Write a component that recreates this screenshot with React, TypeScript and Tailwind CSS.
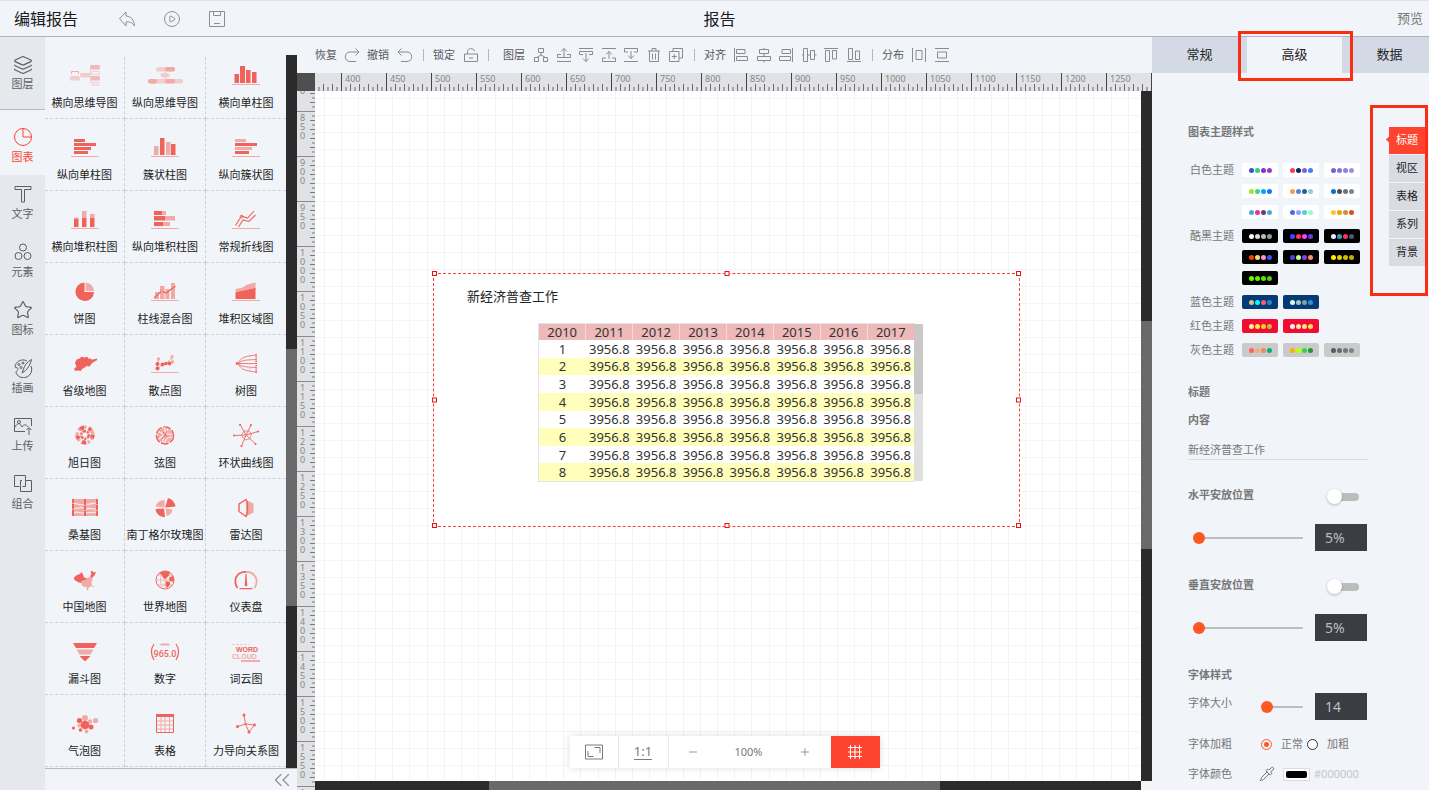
import { useState, type ReactNode } from 'react'
import { ChevronsLeft, CirclePlay, Layers, Minus, Pipette, Plus, Star } from 'lucide-react'

const R = '#f0635a'
const P = '#f2aaa7'
const L = '#f1cdce'

function BaseLine() {
  return <rect x="0" y="20" width="28" height="1" fill={P} />
}

interface Chart {
  name: string
  icon: ReactNode
}

const CHARTS: Chart[] = [
  {
    name: '横向思维导图',
    icon: (
      <>
        <rect x="19" y="1" width="10" height="4.5" rx="1.5" fill={P} opacity=".8" />
        <rect x="9" y="9" width="11" height="4.5" rx="1.5" fill={L} />
        <rect x="-1" y="12" width="10" height="4.5" rx="1.5" fill={L} />
        <rect x="19" y="12" width="10" height="4.5" rx="1.5" fill={P} opacity=".8" />
        <path d="M0.5 10V7.5h7V10" fill="none" stroke={P} />
        <path d="M28 7.5h-7v3h7zM28 18.5h-7v2.5h7zM19.5 4v15" fill="none" stroke={L} />
      </>
    ),
  },
  {
    name: '纵向思维导图',
    icon: (
      <>
        <rect x="5" y="3" width="19" height="4.5" rx="2" fill={L} />
        <rect x="14" y="3" width="10" height="4.5" rx="2" fill={P} />
        <rect x="9.5" y="9" width="9" height="4.5" rx="2" fill={L} />
        <path d="M14 7v8" stroke={L} />
        <rect x="-3" y="15" width="35" height="4.5" rx="2" fill={L} />
        <rect x="-3" y="15" width="9" height="4.5" rx="2" fill={P} />
        <rect x="14" y="15" width="10" height="4.5" rx="2" fill={P} />
      </>
    ),
  },
  {
    name: '横向单柱图',
    icon: (
      <>
        <path d="M2.5 19v-9H7v9zM8 19V2h5v17zM14 19V6h4.500v13zM20 19V8h4.500v11z" fill={R} />
        <BaseLine />
      </>
    ),
  },
  {
    name: '纵向单柱图',
    icon: (
      <>
        <path d="M3 3h11v3H3zM3 7h22v3H3zM3 11h17v3H3zM3 15h14v3H3z" fill={R} />
        <BaseLine />
      </>
    ),
  },
  {
    name: '簇状柱图',
    icon: (
      <>
        <path d="M3 19v-9h4.500v9zM15 19V6h4.500v13z" fill={P} />
        <path d="M9 19V2h4.500v17zM20 19V8h4.500v11z" fill={R} />
        <BaseLine />
      </>
    ),
  },
  {
    name: '纵向簇状图',
    icon: (
      <>
        <path d="M3 3h11v3H3zM3 11h17v3H3z" fill={P} />
        <path d="M3 7h22v3H3zM3 15h14v3H3z" fill={R} />
        <BaseLine />
      </>
    ),
  },
  {
    name: '横向堆积柱图',
    icon: (
      <>
        <path d="M3 12V9.500h4.500V12zM11 10V3h4.500v7zM19 10V6h4.500v4z" fill={P} />
        <path d="M3 19v-8h4.500v8zM11 19v-9h4.500v9zM19 19v-9h4.500v9z" fill={R} />
        <BaseLine />
      </>
    ),
  },
  {
    name: '纵向堆积柱图',
    icon: (
      <>
        <path d="M11 3h4v4h-4zM14 8h10v4.500H14zM12 14h7v4h-7z" fill={P} />
        <path d="M3 3h8v4H3zM3 8h11v4.500H3zM3 14h9v4H3z" fill={R} />
        <BaseLine />
      </>
    ),
  },
  {
    name: '常规折线图',
    icon: (
      <>
        <path d="M3.500 17.500L9.500 8l6 2L22 3M6.500 19L11 12l6 1.500L23.500 7" fill="none" stroke={R} strokeWidth="1.1" />
        <circle cx="9.500" cy="8.500" r="1.400" fill="none" stroke={R} strokeWidth=".8" />
        <BaseLine />
      </>
    ),
  },
  {
    name: '饼图',
    icon: (
      <>
        <path d="M13.500 2.500V12H23A9.300 9.300 0 1 1 13.500 2.500z" fill={R} />
        <path d="M14.500 2.500A9 9 0 0 1 23 11h-8.500z" fill={P} />
      </>
    ),
  },
  {
    name: '柱线混合图',
    icon: (
      <>
        <path d="M4 19v-7h4v7zM9 19V6h4.500v13zM14.500 19V9h4v10zM20 19V3h4v16z" fill={P} />
        <path d="M3 18l7.500-7 4.500 2 9.500-7" fill="none" stroke={R} strokeWidth="1.300" />
        <circle cx="10.500" cy="11" r="1.100" fill="#f1f4f9" stroke={R} strokeWidth=".7" />
        <BaseLine />
      </>
    ),
  },
  {
    name: '堆积区域图',
    icon: (
      <>
        <path d="M3.500 13V9l6-1 6-3.500L23.500 2.500V10z" fill={P} />
        <path d="M3.500 19v-6.500l9-2L23.500 8v11z" fill={R} />
        <BaseLine />
      </>
    ),
  },
  {
    name: '省级地图',
    icon: (
      <path
        d="M4 11l1.500-3.500 3-1 2-1.800 3.500.8 2-.9 1.500 2.200 2-.4 1.500 1.300 4.800-1.200.5 1.500-3.600 2-2.500 2-1.500 2.600-3-.6-2 1.500-2.500 1.500-1.500 2-2.500-.5-2.700.5-1.500-2 2.500-2.500z"
        fill={R}
      />
    ),
  },
  {
    name: '散点图',
    icon: (
      <>
        <path d="M7.500 7L6 17l5-4 5-1.500L21 5v6" fill="none" stroke={P} />
        <g fill={P}>
          <circle cx="7.500" cy="7" r="1.700" />
          <circle cx="21" cy="4.500" r="1.600" />
          <circle cx="21.500" cy="10" r="1.700" />
        </g>
        <g fill={R}>
          <circle cx="6.500" cy="12" r="2" />
          <circle cx="6.500" cy="16.500" r="2" />
          <circle cx="11.500" cy="12.500" r="2" />
          <circle cx="15" cy="11.500" r="1.800" />
          <circle cx="18.500" cy="11.500" r="1.900" />
        </g>
        <BaseLine />
      </>
    ),
  },
  {
    name: '树图',
    icon: (
      <g fill="none" stroke={R} strokeWidth=".8">
        <path d="M4 11.500h20M6 11.500C9 5 13 4.500 24 3M6 11.500C10 8 14 8 24 7.500M6 11.500C9 18 13 18.500 24 20M6 11.500C10 15 14 15 24 15.500" />
        <path d="M24.200 2v19" strokeWidth="1.600" strokeDasharray="1.300 .9" />
        <path d="M18 2.500v18" stroke={P} strokeDasharray="1.500 3" />
        <circle cx="5" cy="11.500" r="1" fill={R} />
      </g>
    ),
  },
  {
    name: '旭日图',
    icon: (
      <g fill="none">
        <circle cx="14" cy="11" r="7.800" stroke={P} strokeWidth="3.500" strokeDasharray="5 2 2.500 1.500" />
        <circle cx="14" cy="11" r="7.500" stroke={R} strokeWidth="4" strokeDasharray="3 7.500 4 5" />
        <circle cx="14" cy="11" r="3.800" stroke={R} strokeWidth="2.500" strokeDasharray="3.500 1 2 1" />
        <circle cx="14" cy="11" r="1.200" fill="#f1f4f9" />
      </g>
    ),
  },
  {
    name: '弦图',
    icon: (
      <g fill="none">
        <circle cx="14" cy="11.500" r="7.500" fill={P} />
        <circle cx="14" cy="11.500" r="8.500" stroke={R} strokeWidth="1.500" strokeDasharray="8 1.500" />
        <path d="M7 8c5 0 6 3 5 10M14 3c-1 5 1 8 7 7M8 15c4-3 7-6 9-10M14 19c0-4 3-6 7-6" stroke="#f1f4f9" strokeWidth="1.100" />
        <path d="M12 8l4 5M16 7l-5 8" stroke={R} />
      </g>
    ),
  },
  {
    name: '环状曲线图',
    icon: (
      <g stroke={R} fill={R} strokeWidth=".9">
        <path d="M14 11L8 .5M14 11L19 1M14 11l12-3.500M14 11l9.500 9M14 11L9.500 22M14 11L2 11.500" fill="none" />
        <path d="M12 7l5 0 2.500 3-2 5-4.500 1-3.500-5z" fill="none" strokeWidth=".7" />
        <g stroke="none">
          <circle cx="8" cy=".8" r="1.100" />
          <circle cx="19" cy="1" r="1.100" />
          <circle cx="26" cy="7.500" r="1.100" />
          <circle cx="23.500" cy="20" r="1.100" />
          <circle cx="9.500" cy="22" r="1.100" />
          <circle cx="2" cy="11.500" r="1.100" />
        </g>
      </g>
    ),
  },
  {
    name: '桑基图',
    icon: (
      <>
        <path d="M1 3h26v17H1z" fill={P} />
        <path d="M3 7.500c4 0 6 2 10 1M15 8c4 1 7-1.500 11-1M3 12c4 1 6-1 10 0M15 13c4-2 7 1 11 0M3 16.500c4-1.500 6 1 10 .5M15 16.500c4 1 7-1 11 0" fill="none" stroke="#f1f4f9" strokeWidth="1.100" />
        <path d="M1 3h2v4H1zM1 8h2v5H1zM1 14h2v6H1zM13 3h2v6h-2zM13 10h2v4h-2zM13 15h2v5h-2zM25 3h2v5h-2zM25 9h2v5h-2zM25 15h2v5h-2z" fill={R} />
      </>
    ),
  },
  {
    name: '南丁格尔玫瑰图',
    icon: (
      <>
        <path d="M13.500 11.500L4.500 10.500a9.500 9.500 0 0 1 9-6.500zM14.500 12.500l7 1a7.500 7.500 0 0 1-6 6.500z" fill={P} />
        <path d="M14 11.500L17 2a11 11 0 0 1 7.500 8.500zM13 12.500l1 8.500A8.500 8.500 0 0 1 4.500 13z" fill={R} />
      </>
    ),
  },
  {
    name: '雷达图',
    icon: (
      <>
        <path d="M14 4l7.500 3.500v9L14 20.500z" fill={P} />
        <path d="M14 3.500L7 8v7.500l7 5L15.500 16V7z" fill="none" stroke={R} strokeWidth="1.400" />
      </>
    ),
  },
  {
    name: '中国地图',
    icon: (
      <>
        <path d="M3 9.500l3-2.500 3-1 1.500-2 1.500 2.500 1 3 5 1.500-1 3-5 1.500-4-1-3-1.500-2-1.500z" fill={R} />
        <path d="M10 13l5-1.500 3-2.500 4-1-.5 3-1 3 .5 3.500-3.500 2.500-3.500-1-3-1z" fill={P} />
        <path d="M19 8.500l1.500-2.500-1-2.500 1.500-.8 1.500 1.500 2.500-.2-1.500 3.500-2 2z" fill={R} />
        <circle cx="16.500" cy="21" r=".8" fill={R} />
        <circle cx="22" cy="18.500" r=".6" fill={R} />
      </>
    ),
  },
  {
    name: '世界地图',
    icon: (
      <>
        <circle cx="14" cy="12" r="9" fill="none" stroke={R} />
        <path d="M5 12h18M14 3v18M7 7h14M7 17h14" stroke={P} strokeWidth=".8" />
        <ellipse cx="14" cy="12" rx="4.500" ry="9" fill="none" stroke={P} strokeWidth=".8" />
        <path d="M8 5l5-2 6 1-1 3-3 4-3-1-1-3zM19 9l3-1 1 4-2 2-3-2zM15 13l4 1 0 3-3 3-1.500-3z" fill={R} />
      </>
    ),
  },
  {
    name: '仪表盘',
    icon: (
      <>
        <path d="M5.500 20A11.500 11.500 0 0 1 4 9.500 10.500 10.500 0 0 1 14 4" fill="none" stroke={R} strokeWidth="1.800" />
        <path d="M14 4a10.500 10.500 0 0 1 10 6 11.500 11.500 0 0 1-1.500 10" fill="none" stroke={P} strokeWidth="1.800" />
        <path d="M13.500 6h1l.8 12h-2.600zM7.500 20h13v1.200h-13z" fill={R} />
      </>
    ),
  },
  {
    name: '漏斗图',
    icon: (
      <>
        <path d="M2 3h24l-3 5H5z" fill={R} />
        <path d="M5.500 9.500h17l-3 5h-11z" fill={P} />
        <path d="M8.500 16h11L14.500 21h-1z" fill={R} />
      </>
    ),
  },
  {
    name: '数字',
    icon: (
      <>
        <path d="M9.500 3.500h9v2h-9z" fill={P} />
        <path d="M3 4c-3.500 5-3.500 10 0 16M25 4c3.500 5 3.500 10 0 16" fill="none" stroke={R} strokeWidth="1.200" />
        <text x="14" y="17" textAnchor="middle" fill={R} className="font-['Roboto',sans-serif] text-[9px] font-medium">965.0</text>
      </>
    ),
  },
  {
    name: '词云图',
    icon: (
      <>
        <path d="M0 4.500h17" stroke={L} strokeDasharray="3 1" />
        <text x="4" y="12" fill={R} className="font-['Liberation_Sans',sans-serif] text-[7px] font-bold">WORD</text>
        <text x="0" y="19" fill={P} className="font-['Liberation_Sans',sans-serif] text-[7px] font-bold">CLOUD</text>
        <path d="M9 20.500h19v1H9z" fill={R} />
      </>
    ),
  },
  {
    name: '气泡图',
    icon: (
      <>
        <g fill={P}>
          <circle cx="14" cy="6" r="3" />
          <circle cx="24.500" cy="8.500" r="2.600" />
          <circle cx="19" cy="9.500" r="2.200" />
          <circle cx="15.500" cy="19.500" r="1.900" />
          <circle cx="8.500" cy="13.500" r="2" />
        </g>
        <g fill={R}>
          <circle cx="14" cy="13" r="4.300" />
          <circle cx="8.500" cy="8.500" r="2.600" />
          <circle cx="20" cy="15" r="2.500" />
          <circle cx="9.500" cy="18" r="1.800" />
          <circle cx="2.500" cy="16" r="1.600" />
        </g>
      </>
    ),
  },
  {
    name: '表格',
    icon: (
      <>
        <path d="M5.500 9h17M5.500 13h17M5.500 17h17M10 5v15M14 5v15M18.500 5v15" stroke={P} />
        <path d="M5.500 3v17.500h17V3z" fill="none" stroke={R} />
        <path d="M5 2h18v3H5z" fill={R} />
      </>
    ),
  },
  {
    name: '力导向关系图',
    icon: (
      <>
        <path d="M12 3l1.500 9-8 2.500M13.500 12l9 1L17 20z" fill="none" stroke={R} strokeWidth=".9" />
        <g fill={R}>
          <circle cx="12" cy="3" r="1.500" />
          <circle cx="5.500" cy="14.500" r="1.500" />
          <circle cx="13.500" cy="12" r="1.100" />
          <circle cx="22.500" cy="13" r="1.400" />
          <circle cx="17" cy="20" r="1.500" />
        </g>
      </>
    ),
  },
]

const NAV: Chart[] = [
  { name: '图层', icon: <Layers className="size-5" strokeWidth={1.4} /> },
  {
    name: '图表',
    icon: (
      <Glyph size="size-5" box="0 0 20 20">
        <circle cx="10" cy="10" r="8.500" />
        <path d="M10 1.500V10h8.500" />
      </Glyph>
    ),
  },
  {
    name: '文字',
    icon: (
      <Glyph size="size-5" box="0 0 20 20">
        <path d="M2 2.500h16v3h-6.500V18h-3V5.500H2z" />
      </Glyph>
    ),
  },
  {
    name: '元素',
    icon: (
      <Glyph size="size-5" box="0 0 20 20">
        <circle cx="10" cy="5.500" r="3.500" />
        <circle cx="5.500" cy="14" r="3.500" />
        <circle cx="14.500" cy="14" r="3.500" />
      </Glyph>
    ),
  },
  { name: '图标', icon: <Star className="size-5" strokeWidth={1.4} /> },
  {
    name: '插画',
    icon: (
      <Glyph size="size-5" box="0 0 20 20">
        <path d="M14 3A8 8 0 0 0 2 9c1.500 1 3.500.5 3 2.500-.5 1.500-2.500 2-2 3.500a8 8 0 0 0 15-7M18.500 1.500C14 4 11.500 7.500 10.500 11l-1.500 4 3.500-2.500c3-3 5-6.500 6-11z" />
        <circle cx="6" cy="6.500" r="1" />
        <circle cx="10" cy="5" r="1" />
        <circle cx="8" cy="9.500" r="1" />
      </Glyph>
    ),
  },
  {
    name: '上传',
    icon: (
      <Glyph size="size-5" box="0 0 20 20">
        <path d="M12 15.500H1.500v-13h17V10M2 11c3-5 5-4 7 0 2-3 4-3 6 0M16 19v-7M13.500 14l2.500-2.500 2.500 2.500" />
        <circle cx="6" cy="6" r="1.500" />
      </Glyph>
    ),
  },
  {
    name: '组合',
    icon: (
      <Glyph size="size-5" box="0 0 20 20">
        <path d="M6.500 12.500h-5v-11h11v5M12.500 6.500h6v11h-11v-6M7.500 6.500H9M7.500 6.500v5M12.500 6.500v6h-3" />
      </Glyph>
    ),
  },
]

const LAYER_TOOLS: Chart[] = [
  { name: '图层结构', icon: <path d="M5.500 1.500h5v4h-5zM1.500 10.500h4v4h-4zM10.500 10.500h4v4h-4zM8 5.500v2.500L3.500 10.500M8 8l4.500 2.500" /> },
  { name: '上移一层', icon: <path d="M8 10V1.500M5 4.500l3-3 3 3M5 7.500H1.500v3h13v-3H11M1 14.500h14" /> },
  { name: '下移一层', icon: <path d="M1 1.500h14M5 7.500H1.500v-3h13v3H11M8 6v8.500M5 11.500l3 3 3-3" /> },
  { name: '置于顶层', icon: <path d="M1 1.500h14M8 12V4.500M5 7.500l3-3 3 3M5 11H1.500v3.500h13V11H11" /> },
  { name: '置于底层', icon: <path d="M1 14.500h14M8 4v7.500M5 8.500l3 3 3-3M5 5H1.500V1.500h13V5H11" /> },
  { name: '删除', icon: <path d="M2 4h12M6 4V1.500h4V4M3.500 4v10.500h9V4M6.500 6.500v6M9.500 6.500v6" /> },
  { name: '复制', icon: <path d="M5 4.500V1.500h9.500V11H11M1.500 4.500H11v10H1.500zM6.250 7v5M3.750 9.500h5" /> },
]

const ALIGN_TOOLS: Chart[] = [
  { name: '左对齐', icon: <path d="M1.500 1v14M3.500 2.500H12v4H3.500zM3.500 9.500h11v4h-11z" /> },
  { name: '水平居中', icon: <path d="M8 1v2M8 6.500v3M8 13.500v2M3.500 2.500h9v4h-9zM1.500 9.500h13v4h-13z" /> },
  { name: '右对齐', icon: <path d="M14.500 1v14M4 2.500h8.500v4H4zM1.500 9.500h11v4h-11z" /> },
  { name: '垂直居中', icon: <path d="M1 8h2M6.500 8h3M13.500 8h2M2.500 1.500h4v13h-4zM9.500 3.500h4v9h-4z" /> },
  { name: '顶对齐', icon: <path d="M1 1.500h14M2.500 3.500h4v11h-4zM9.500 3.500h4V12h-4z" /> },
  { name: '底对齐', icon: <path d="M1 14.500h14M2.500 1.500h4v11h-4zM9.500 4h4v8.500h-4z" /> },
]

const THEMES = [
  {
    name: '白色主题',
    bg: 'bg-white',
    sets: [
      ['#3355cc', '#33cc80', '#7d33cc', '#a033cc'],
      ['#ff3855', '#042a5c', '#8060d8', '#3c80ff'],
      ['#7560d0', '#8a70dc', '#9080dc', '#a090dc'],
      ['#a6e22e', '#33dc78', '#09a0ff', '#0a78ff'],
      ['#ff9a40', '#4a88d8', '#2a60a0', '#8cd0e0'],
      ['#0a70c0', '#4c5052', '#707478', '#808488'],
      ['#4aa8e8', '#e03890', '#703880', '#4aa8e0'],
      ['#5068e8', '#90a0ff', '#50cce0', '#90ffc8'],
      ['#ffc040', '#f0a000', '#c89040', '#d85020'],
    ],
  },
  {
    name: '酷黑主题',
    bg: 'bg-black',
    sets: [
      ['#ffffff', '#dddddd', '#bbbbbb', '#999999'],
      ['#5040ff', '#ff3060', '#ff40ff', '#7038e8'],
      ['#d8f4ff', '#30a0c0', '#ff3060', '#406070'],
      ['#ff4000', '#f0e080', '#ff90d0', '#4050ff'],
      ['#5040e8', '#c0ff90', '#8040f0', '#ff9070'],
      ['#fff000', '#e0d000', '#d0c000', '#c0b000'],
      ['#60ff00', '#60f000', '#60e000', '#50d000'],
    ],
  },
  {
    name: '蓝色主题',
    bg: 'bg-[#053a77]',
    sets: [
      ['#e0c080', '#00ffff', '#f06070', '#3080d0'],
      ['#d0fff0', '#a0c8b8', '#80a0a0', '#3090d0'],
    ],
  },
  {
    name: '红色主题',
    bg: 'bg-[#f20c34]',
    sets: [
      ['#fff0a0', '#f8f040', '#e0d030', '#c0c030'],
      ['#fff8e8', '#ffe8b0', '#ffe090', '#ffe050'],
    ],
  },
  {
    name: '灰色主题',
    bg: 'bg-[#cacaca]',
    sets: [
      ['#ff6060', '#f0b070', '#f08860', '#00b078'],
      ['#ffb000', '#c0ff00', '#30d840', '#209830'],
      ['#585c60', '#686c70', '#74787c', '#808488'],
    ],
  },
]

const YEARS = [2010, 2011, 2012, 2013, 2014, 2015, 2016, 2017]
const SECTIONS = ['标题', '视区', '表格', '系列', '背景']
const TABS = ['常规', '高级', '数据']
const HANDLES = [
  '-left-[2px] -top-[3px]',
  'left-1/2 -top-[3px] -translate-x-1/2',
  '-right-[2px] -top-[3px]',
  '-left-[2px] top-1/2 -translate-y-1/2',
  '-right-[2px] top-1/2 -translate-y-1/2',
  '-left-[2px] -bottom-[2px]',
  'left-1/2 -bottom-[2px] -translate-x-1/2',
  '-right-[2px] -bottom-[2px]',
]

function Glyph({ size = 'size-4', box = '0 0 16 16', children }: { size?: string; box?: string; children: ReactNode }) {
  return (
    <svg className={`${size} shrink-0`} viewBox={box} fill="none" stroke="currentColor" strokeLinejoin="round">
      {children}
    </svg>
  )
}

function ToolButton({ name, children }: { name: string; children: ReactNode }) {
  return (
    <button aria-label={name} className="shrink-0 text-[#878b92]">
      <Glyph>{children}</Glyph>
    </button>
  )
}

function Divider() {
  return <span className="h-3 w-px shrink-0 bg-[#b5b8be]" />
}

function Header() {
  return (
    <header className="grid h-[37px] shrink-0 grid-cols-[1fr_auto_1fr] items-center border-t border-b border-t-[#dfe3e3] border-b-[#b1b5bb] pr-[6px] pl-[16px]">
      <div className="-ml-[2px] flex items-center">
        <h1 className="w-[104px] text-base">编辑报告</h1>
        <div className="flex gap-[27px] text-[#8c8f94]">
          <button aria-label="返回">
            <Glyph size="size-[18px]" box="0 0 18 18">
              <path d="M1.500 8.500L8 2v4c5 .5 8 3.500 8.500 10-2-3.500-5-4.500-8.500-4v4z" />
            </Glyph>
          </button>
          <button aria-label="播放">
            <CirclePlay className="size-[18px]" strokeWidth={1.3} />
          </button>
          <button aria-label="保存">
            <Glyph size="size-[18px]" box="0 0 18 18">
              <path d="M1.500 1.500h15v15h-15zM5.500 1.500v4h7v-4M6 13.500h6" />
            </Glyph>
          </button>
        </div>
      </div>
      <h2 className="text-base">报告</h2>
      <button className="justify-self-end text-[13px] text-[#777]">预览</button>
    </header>
  )
}

function SideNav() {
  return (
    <nav className="flex w-[45px] shrink-0 flex-col bg-[#e5e8ed] text-[11px] text-[#5b5e64]">
      {NAV.map((item, i) => (
        <button
          key={item.name}
          className={
            i === 0
              ? 'flex h-[73px] flex-col items-center gap-px border-b border-[#b6bac1] pt-[18px]'
              : i === 1
                ? 'flex h-[65px] flex-col items-center gap-[2px] bg-[#f1f4f9] pt-[17px] text-[#fe442e]'
                : 'flex h-[58px] flex-col items-center gap-[2px] pt-[9px]'
          }
        >
          {item.icon}
          <span className="leading-4">{item.name}</span>
        </button>
      ))}
    </nav>
  )
}

function ChartPanel() {
  return (
    <aside className="flex w-[252px] shrink-0 flex-col">
      <div className="flex min-h-0 flex-1 pt-[18px]">
        <div className="min-w-0 flex-1 overflow-hidden">
          <div className="-mt-2 grid grid-cols-[80px_81px_80px]">
            {CHARTS.map((c, i) => (
              <button
                key={c.name}
                className={`flex h-[72px] flex-col items-center gap-[9px] border-b border-dashed border-[#cdd0d5] pt-[17px] ${i % 3 < 2 ? 'border-r' : ''}`}
              >
                <svg className="h-[22px] w-7 shrink-0 overflow-visible" viewBox="0 0 28 22">
                  {c.icon}
                </svg>
                <span className="text-[11px] leading-4 whitespace-nowrap">{c.name}</span>
              </button>
            ))}
          </div>
        </div>
        <div className="flex w-[11px] flex-col bg-[#2b2b2b]">
          <div className="mt-[294px] h-[257px] bg-[#696969]" />
        </div>
      </div>
      <div className="flex h-[22px] shrink-0 items-center justify-end border-t border-[#b6bac1] pr-[2px]">
        <button aria-label="收起" className="text-[#8f9298]">
          <ChevronsLeft className="size-[26px]" strokeWidth={1.2} absoluteStrokeWidth />
        </button>
      </div>
    </aside>
  )
}

function Toolbar() {
  return (
    <div className="flex h-9 shrink-0 items-center pl-[18px] text-[11px] whitespace-nowrap text-[#55585e]">
      <span className="mr-[7px]">恢复</span>
      <ToolButton name="恢复">
        <path d="M14.500 5H6a4.500 4.500 0 0 0 0 9.500h6M11.500 1.500L15 5l-3.500 3.500" />
      </ToolButton>
      <span className="mr-2 ml-[7px]">撤销</span>
      <ToolButton name="撤销">
        <path d="M1.500 5H10a4.500 4.500 0 0 1 0 9.500H4M4.500 1.500L1 5l3.500 3.500" />
      </ToolButton>
      <div className="mr-[9px] ml-[10px] flex"><Divider /></div>
      <span className="mr-2">锁定</span>
      <ToolButton name="锁定">
        <path d="M1.500 7h13v7.500h-13zM4.500 7V4.500C4.500 1 10.500.5 11.500 4M6 11h4" />
      </ToolButton>
      <div className="mr-[14px] ml-[9px] flex"><Divider /></div>
      <span>图层</span>
      <div className="mr-[10px] ml-2 flex w-[151px] justify-between">
        {LAYER_TOOLS.map(t => (
          <ToolButton key={t.name} name={t.name}>{t.icon}</ToolButton>
        ))}
      </div>
      <Divider />
      <span className="ml-[9px]">对齐</span>
      <div className="mr-[10px] ml-[7px] flex w-[129px] justify-between">
        {ALIGN_TOOLS.map(t => (
          <ToolButton key={t.name} name={t.name}>{t.icon}</ToolButton>
        ))}
      </div>
      <Divider />
      <span className="mr-[7px] ml-[9px]">分布</span>
      <div className="flex gap-[7px]">
        <ToolButton name="水平分布">
          <path d="M1.500 1v14M14.500 1v14M5 3.500h6v9H5z" />
        </ToolButton>
        <ToolButton name="垂直分布">
          <path d="M1 1.500h14M1 14.500h14M3.500 5h9v6h-9z" />
        </ToolButton>
      </div>
    </div>
  )
}

function HorizontalTicks() {
  return (
    <svg className="absolute bottom-0 -left-px h-[7px] w-[45px]" viewBox="0 0 45 7" stroke="#6b6b6e">
      <path d="M9.500 0v7M18.500 0v7M27.500 0v7M36.500 0v7M5 3v4M14 3v4M23 3v4M32 3v4M41 3v4" />
    </svg>
  )
}

function TopRuler() {
  const marks = Array.from({ length: 18 }, (_, i) => 400 + i * 50)
  return (
    <div className="flex h-[18px] shrink-0 bg-[#e1e2e5]">
      <div className="w-[18px] shrink-0 bg-[#4f4f4f]" />
      <div className="flex min-w-0 flex-1 overflow-hidden text-[9px] leading-3 text-[#85878b]">
        <div className="relative -ml-[18px] w-11 shrink-0">
          <HorizontalTicks />
        </div>
        {marks.map(m => (
          <div key={m} className="relative h-[18px] w-[45px] shrink-0 border-l border-[#444] pl-[3px]">
            {m}
            <HorizontalTicks />
          </div>
        ))}
        <div className="w-px shrink-0 bg-[#444]" />
      </div>
    </div>
  )
}

function LeftRuler() {
  const marks = Array.from({ length: 17 }, (_, i) => 800 + i * 50)
  return (
    <div className="w-[18px] shrink-0 overflow-hidden bg-[#e1e2e5]">
      <div className="-mt-[25px]">
        {marks.map(m => (
          <div key={m} className="relative h-[45px] border-t border-[#8a8a8d] pt-px pl-[3px] text-[9px] leading-[9px] text-[#85878b]">
            <div className="w-[6px] break-all">{m}</div>
            <svg className="absolute -top-px right-0 h-[45px] w-[5px]" viewBox="0 0 5 45" stroke="#77797c">
              <path d="M0 9.500h5M0 18.500h5M0 27.500h5M0 36.500h5M2 5h3M2 14h3M2 23h3M2 32h3M2 41h3" />
            </svg>
          </div>
        ))}
      </div>
    </div>
  )
}

function DataTable() {
  return (
    <div className="flex h-[157px] w-[384px]">
      <table className="h-full w-[375px] table-fixed border-collapse bg-white text-center text-[13px] leading-4 text-[#333] outline outline-[#e3e3e3]">
        <thead>
          <tr className="bg-[#edb9b9]">
            {YEARS.map(y => (
              <th key={y} className="border-r border-[#f6dada] p-0 font-normal last:border-r-0">{y}</th>
            ))}
          </tr>
        </thead>
        <tbody>
          {[1, 2, 3, 4, 5, 6, 7, 8].map(n => (
            <tr key={n} className="even:bg-[#ffffbb]">
              <td className="p-0">{n}</td>
              {YEARS.slice(1).map(y => (
                <td key={y} className="p-0">3956.8</td>
              ))}
            </tr>
          ))}
        </tbody>
      </table>
      <div className="w-[9px] bg-[#dfdfdf]">
        <div className="h-[70px] bg-[#c8c8c8]" />
      </div>
    </div>
  )
}

function Canvas() {
  const steps = [9, 26, 43, 60, 77, 94, 112, 129, 146, 163]
  return (
    <div className="relative min-w-0 flex-1 overflow-hidden bg-white">
      <svg className="absolute inset-0 h-full w-full">
        <defs>
          <pattern id="grid" width="171" height="171" patternUnits="userSpaceOnUse">
            {steps.map(s => (
              <path key={s} d={`M${s + 0.5} 0v171M0 ${s - 1.5}h171`} stroke="#f1f4fb" />
            ))}
          </pattern>
        </defs>
        <rect width="100%" height="100%" fill="url(#grid)" />
      </svg>
      <div className="absolute top-[182px] left-[118px] h-[254px] w-[587px] border border-dashed border-[#f5443a] bg-white">
        <p className="pt-[13px] pl-[33px] text-[13px] leading-[18px] text-[#222]">新经济普查工作</p>
        <div className="mt-[19px] ml-[105px]">
          <DataTable />
        </div>
        {HANDLES.map(h => (
          <span key={h} className={`absolute size-[5px] border border-[#f01010] bg-white ${h}`} />
        ))}
      </div>
    </div>
  )
}

function ZoomBar() {
  return (
    <div className="absolute bottom-[22px] left-1/2 flex h-8 -translate-x-1/2 bg-white text-[#777a80] shadow-[0_0_8px_rgba(0,0,0,0.12)]">
      <button aria-label="适应屏幕" className="flex w-[49px] items-center justify-center border-r border-[#e9e9ec]">
        <Glyph size="size-5" box="0 0 20 20">
          <path d="M1.500 3h17v14h-17zM10.500 5.500H16V11M9.500 14.500H4V9" />
        </Glyph>
      </button>
      <button className="flex w-[50px] items-center justify-center border-r border-[#e9e9ec]">
        <span className="border-b border-current text-[13px] leading-[15px]">1:1</span>
      </button>
      <div className="flex w-[162px] items-center justify-between pr-5 pl-[18px]">
        <button aria-label="缩小"><Minus className="size-3" strokeWidth={1.5} /></button>
        <span className="text-[11px]">100%</span>
        <button aria-label="放大"><Plus className="size-3" strokeWidth={1.5} /></button>
      </div>
      <button aria-label="网格" className="flex w-[49px] items-center justify-center bg-[#fe442e] text-white">
        <Glyph>
          <path d="M3.500 1v14M8 1v14M12.500 1v14M1 3.500h14M1 8h14M1 12.500h14" />
        </Glyph>
      </button>
    </div>
  )
}

function Workspace() {
  return (
    <main className="relative flex min-w-0 flex-1 flex-col overflow-hidden">
      <Toolbar />
      <TopRuler />
      <div className="flex min-h-0 flex-1">
        <LeftRuler />
        <div className="flex min-w-0 flex-1 flex-col">
          <div className="flex min-h-0 flex-1">
            <Canvas />
            <div className="w-[11px] shrink-0 bg-[#2b2b2b]">
              <div className="mt-[230px] h-[228px] bg-[#696969]" />
            </div>
          </div>
          <div className="mr-[11px] h-[9px] shrink-0 bg-[#2b2b2b] pl-[174px]">
            <div className="h-full w-[451px] bg-[#696969]" />
          </div>
        </div>
      </div>
      <ZoomBar />
    </main>
  )
}

const rangeClass =
  'h-3 appearance-none bg-transparent [&::-webkit-slider-runnable-track]:h-[2px] [&::-webkit-slider-runnable-track]:rounded-full [&::-webkit-slider-runnable-track]:bg-[#bdbdbd] [&::-webkit-slider-thumb]:-mt-[5px] [&::-webkit-slider-thumb]:size-3 [&::-webkit-slider-thumb]:appearance-none [&::-webkit-slider-thumb]:rounded-full [&::-webkit-slider-thumb]:bg-[#ff5722]'

const boxClass = 'h-[27px] w-[52px] bg-[#3a3e43] pl-[10px] text-sm text-[#bcbec1]'

const radioClass =
  'mr-[9px] size-[11px] appearance-none rounded-full border border-[#333] bg-white p-[2px] checked:border-[#ff5722] checked:bg-[#ff5722] checked:bg-clip-content'

function PositionField({ id, title }: { id: string; title: string }) {
  const [value, setValue] = useState(5)
  return (
    <div>
      <div className="flex h-5 items-center justify-between pr-[9px]">
        <label htmlFor={`${id}-on`} className="font-bold">{title}</label>
        <input
          id={`${id}-on`}
          type="checkbox"
          className="relative mt-1 h-2 w-[25px] appearance-none rounded-full bg-[#bdbdbd] before:absolute before:-top-1 before:-left-[7px] before:size-[15px] before:rounded-full before:bg-white before:shadow-[0_1px_3px_rgba(0,0,0,0.25)]"
        />
      </div>
      <div className="mt-[19px] flex h-[27px] items-center justify-between pr-px pl-[5px]">
        <input
          type="range"
          aria-label={title}
          min={5}
          max={100}
          value={value}
          onChange={e => setValue(Number(e.target.value))}
          className={`${rangeClass} w-[110px]`}
        />
        <input aria-label={`${title}数值`} value={`${value}%`} readOnly className={boxClass} />
      </div>
    </div>
  )
}

function Inspector() {
  const [size, setSize] = useState(14)
  return (
    <aside className="relative w-[277px] shrink-0">
      <div className="flex h-9 overflow-hidden text-[13px]">
        {TABS.map(t => (
          <button key={t} className={`w-[95px] shrink-0 text-[#222] ${t === '高级' ? '' : 'bg-[#d3dae6]'}`}>{t}</button>
        ))}
      </div>
      <div className="absolute top-[-6px] left-[86px] h-[50px] w-[115px] border-3 border-[#fb2d12]" />

      <div className="flex items-start justify-between">
        <div className="w-[216px] pt-[49px] pl-9 text-[11px] leading-5 text-[#777]">
          <h3 className="font-bold">图表主题样式</h3>
          <div className="mt-[21px] flex flex-col gap-[10px] pl-[2px]">
            {THEMES.map(theme => (
              <div key={theme.name} className="flex items-start">
                <span className="w-[52px] leading-[14px]">{theme.name}</span>
                <div className="grid grid-cols-[36px_36px_36px] gap-x-[5px] gap-y-[7px]">
                  {theme.sets.map((set, i) => (
                    <button
                      key={i}
                      aria-label={`${theme.name}${i + 1}`}
                      className={`flex h-[14px] items-center justify-center gap-px rounded-xs ${theme.bg}`}
                    >
                      {set.map(c => (
                        <i key={c} className="size-[5px] rounded-full" style={{ backgroundColor: c }} />
                      ))}
                    </button>
                  ))}
                </div>
              </div>
            ))}
          </div>

          <h3 className="mt-[25px] font-bold">标题</h3>
          <label htmlFor="title-text" className="mt-2 block font-bold">内容</label>
          <input
            id="title-text"
            defaultValue="新经济普查工作"
            className="mt-[10px] mb-[25px] h-5 w-full border-b border-[#dcdfe0] text-[#777]"
          />
          <PositionField id="pos-x" title="水平安放位置" />
          <div className="mt-6">
            <PositionField id="pos-y" title="垂直安放位置" />
          </div>

          <h3 className="mt-6 font-bold">字体样式</h3>
          <div className="mt-2 flex h-[27px] items-center pr-px">
            <label htmlFor="font-size" className="w-[73px] self-start">字体大小</label>
            <input
              id="font-size"
              type="range"
              min={14}
              max={72}
              value={size}
              onChange={e => setSize(Number(e.target.value))}
              className={`${rangeClass} mr-3 w-[42px]`}
            />
            <input aria-label="字号" value={size} readOnly className={boxClass} />
          </div>
          <fieldset className="mt-[14px] flex h-5 items-center">
            <legend className="float-left w-[73px]">字体加粗</legend>
            <label className="flex w-[46px] items-center whitespace-nowrap">
              <input type="radio" name="weight" defaultChecked className={radioClass} />
              正常
            </label>
            <label className="flex items-center whitespace-nowrap">
              <input type="radio" name="weight" className={radioClass} />
              加粗
            </label>
          </fieldset>
          <div className="mt-[10px] flex h-5 items-center">
            <label htmlFor="font-color" className="w-[71px]">字体颜色</label>
            <Pipette className="mr-2 size-4 text-[#777]" strokeWidth={1.5} />
            <span className="mr-[4px] h-[13px] w-[27px] border border-[#dcdcdc] bg-white p-[2px]">
              <span className="block h-full rounded-xs bg-black" />
            </span>
            <input id="font-color" defaultValue="#000000" className="w-12 text-[#c4c6c9]" />
          </div>
        </div>

        <div className="relative mt-8 mr-px h-[191px] w-[58px] border-3 border-[#fb2d12] pt-[19px] pl-4">
          {SECTIONS.map((s, i) => (
            <button
              key={s}
              className={`mb-px flex h-[27px] w-9 items-center justify-center text-[11px] ${i === 0 ? 'bg-[#fe442e] text-white' : 'bg-[#d9dce3] text-[#222]'}`}
            >
              {s}
            </button>
          ))}
          <span className="absolute top-[29px] left-[14px] size-[5px] rotate-45 bg-[#fe442e]" />
        </div>
      </div>
    </aside>
  )
}

export default function App() {
  return (
    <div className="flex h-screen flex-col overflow-hidden bg-[#f1f4f9] font-['Noto_Sans','Noto_Sans_CJK_SC',sans-serif] text-[#1c1c1c]">
      <Header />
      <div className="flex min-h-0 flex-1">
        <SideNav />
        <ChartPanel />
        <Workspace />
        <Inspector />
      </div>
    </div>
  )
}
